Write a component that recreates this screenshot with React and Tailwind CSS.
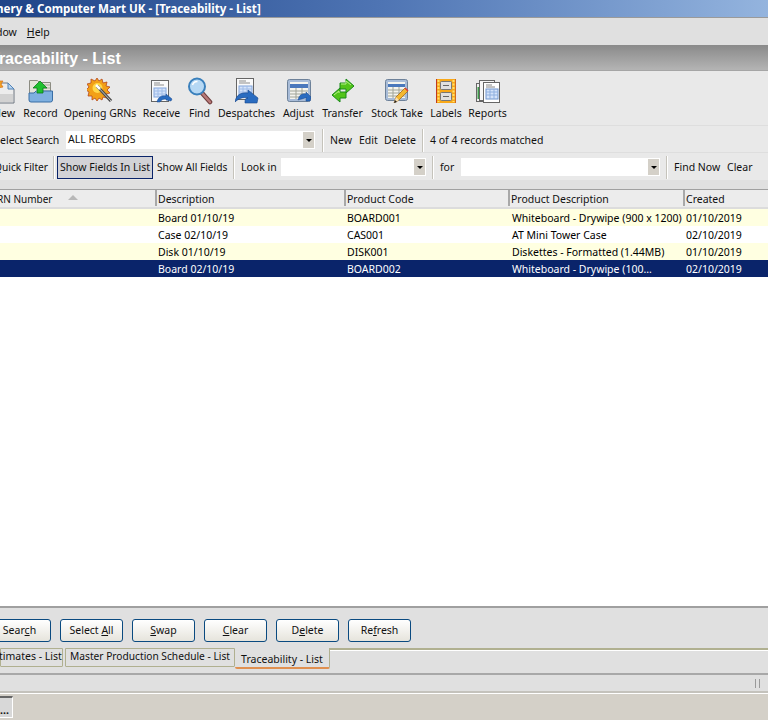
const font = "[font-family:'Noto_Sans',Tahoma,sans-serif]";

const DocIcon = () => (
  <svg width="24" height="26" viewBox="0 0 24 26">
    <path d="M2 5h14l6 6v14H2z" fill="#ececec" stroke="#6f7680" />
    <path d="M3 16h18v8H3z" fill="#d2d2d2" />
    <path d="M16 5v6h6z" fill="#b9d4ee" stroke="#4f82b8" />
    <path d="M0 0l3 2 3-2 1 3 4 0-2 3 2 3-5 1-3-2-3 2z" fill="#f0a020" stroke="#d8701a" strokeWidth="0.7" />
  </svg>
);

const RecordIcon = () => (
  <svg width="26" height="26" viewBox="0 0 26 26">
    <path d="M1.5 23V2.5h8l2 2h11V23z" fill="#e4e4da" stroke="#8c8c82" />
    <path d="M14 7h8M14 10h8M14 13h8" stroke="#a8a89c" />
    <path d="M1 15h5l2-2h16.5v9a2 2 0 0 1-2 2H3a2 2 0 0 1-2-2z" fill="#7fb0e0" stroke="#3a6ea5" />
    <path d="M8 13h7" stroke="#cfe2f5" />
    <path d="M12 3l7 7h-4v5H9v-5H5z" fill="#1fc02e" stroke="#0b7a1a" strokeWidth="0.8" />
  </svg>
);

const StarIcon = () => (
  <svg width="26" height="26" viewBox="0 0 26 26">
    <path d="M10 0l2 3 3-2 1 4 4-1-1 4 4 1-3 3 3 3-4 1 1 4-4-1-1 3-3-2-2 3-2-3-3 2 0-4-4 0 1-4-3-2 3-3-2-3 4-1 0-4 4 2z" fill="#f2a018" stroke="#b8481a" strokeWidth="0.8" />
    <circle cx="10.5" cy="10" r="5" fill="#ffd84a" />
    <path d="M10 8l14 15" stroke="#4a4a4a" strokeWidth="3.2" />
    <path d="M10 8l14 15" stroke="#c4c4c4" strokeWidth="1" />
    <path d="M9 7l4 4" stroke="#fff" strokeWidth="2.5" />
  </svg>
);

const ReceiveIcon = () => (
  <svg width="22" height="24" viewBox="0 0 22 24">
    <rect x="0.5" y="1.5" width="17" height="21" fill="#fafafa" stroke="#666" />
    <path d="M3 4h6M3 6h10" stroke="#8c8c8c" />
    <rect x="3" y="9" width="12" height="9" fill="#d4e3fa" stroke="#80a4dc" />
    <path d="M3 12h12M3 15h12M7 9v9M11 9v9" stroke="#a0bce8" />
    <path d="M6 23c1-5 5-7 9-6v-2l6 5-1 2-5-1v-1c-3 0-5 1-6 3z" fill="#2a6cc0" stroke="#17468c" strokeWidth="0.5" />
  </svg>
);

const DespatchIcon = () => (
  <svg width="24" height="26" viewBox="0 0 24 26">
    <rect x="1.5" y="0.5" width="17" height="21" fill="#fafafa" stroke="#666" />
    <path d="M4 3h7M4 5h11" stroke="#8c8c8c" />
    <rect x="4" y="8" width="13" height="9" fill="#d4e3fa" stroke="#80a4dc" />
    <path d="M4 11h13M4 14h13M8 8v9M12 8v9" stroke="#a0bce8" />
    <path d="M0 24c1-7 6-10 13-9v-3l10 8-1 5H10c0-3 0-5 3-5-5-1-9 0-13 4z" fill="#2a6cc0" stroke="#17468c" strokeWidth="0.6" />
  </svg>
);

const FindIcon = () => (
  <svg width="26" height="28" viewBox="0 0 26 28">
    <path d="M15 16l8 9" stroke="#6e3c3c" strokeWidth="4.6" strokeLinecap="round" />
    <path d="M15 16l8 9" stroke="#b87a78" strokeWidth="2.6" strokeLinecap="round" />
    <circle cx="10" cy="9.5" r="8" fill="#b6d8f4" stroke="#3a80bc" strokeWidth="2" />
    <path d="M5.5 8a5 5 0 0 1 5-3.5" stroke="#fff" strokeWidth="1.5" fill="none" />
  </svg>
);

const AdjustIcon = () => (
  <svg width="24" height="24" viewBox="0 0 24 24">
    <rect x="0.5" y="0.5" width="23" height="22" rx="2" fill="#a8bcd8" stroke="#6d8199" />
    <rect x="3" y="3" width="18" height="17" fill="#f4f4ee" />
    <rect x="3" y="5" width="18" height="4" fill="#4a78bc" />
    <path d="M3 12h18M3 15h18M3 18h18M9 9v11M15 9v11" stroke="#a0a498" />
    <path d="M11 21c1-5 4-7 8-6v-2l5 5-1 4h-4c0-2 0-3 1-3-3 0-5 1-9 2z" fill="#2a6cc0" stroke="#17468c" strokeWidth="0.5" />
  </svg>
);

const TransferIcon = () => (
  <svg width="24" height="26" viewBox="0 0 24 26">
    <path d="M15 1l8 7-8 7v-4H9V5h6z" fill="#52c41a" stroke="#1a8a1a" />
    <path d="M9 10l-8 7 8 7v-4h6v-6H9z" fill="#52c41a" stroke="#1a8a1a" />
    <path d="M10 6h5V3l5 4" stroke="#b8f08a" fill="none" />
    <path d="M8 15v-2l-5 4" stroke="#b8f08a" fill="none" />
  </svg>
);

const StockIcon = () => (
  <svg width="24" height="24" viewBox="0 0 24 24">
    <rect x="0.5" y="0.5" width="22" height="21" rx="2" fill="#a8bcd8" stroke="#6d8199" />
    <rect x="3" y="3" width="17" height="16" fill="#f4f4ee" />
    <rect x="3" y="5" width="17" height="3" fill="#4a78bc" />
    <path d="M3 11h17M3 14h17M3 17h17M8 8v11M14 8v11" stroke="#a0a498" />
    <path d="M9 24l2-6 9-9 3 3-9 9z" fill="#f4b830" stroke="#9a5c10" strokeWidth="0.7" />
    <path d="M9 24l2-6 3 3z" fill="#f8e0b0" />
    <path d="M9 24l1-3 2 2z" fill="#222" />
    <path d="M20 9l3 3" stroke="#d83a3a" strokeWidth="1.5" />
  </svg>
);

const LabelsIcon = () => (
  <svg width="20" height="24" viewBox="0 0 20 24">
    <rect x="0" y="0" width="20" height="24" fill="#f8a818" />
    <path d="M0.5 0v24" stroke="#c03a20" />
    <path d="M19.5 0v24" stroke="#d06a20" />
    <path d="M2.5 1v22M17.5 1v22" stroke="#ffe070" strokeWidth="2" strokeDasharray="2 1.5" />
    <rect x="4.5" y="2.5" width="11" height="8" rx="1" fill="#e0e0e0" stroke="#777" />
    <rect x="4.5" y="13.5" width="11" height="8" rx="1" fill="#e0e0e0" stroke="#777" />
    <path d="M7 6.5h6M7 17.5h6" stroke="#666" />
  </svg>
);

const ReportsIcon = () => (
  <svg width="24" height="24" viewBox="0 0 24 24">
    <rect x="0.5" y="4.5" width="14" height="18" fill="#f0f0f0" stroke="#666" />
    <path d="M2.5 8v12" stroke="#3f9a4a" strokeWidth="2" />
    <rect x="3.5" y="1.5" width="15" height="20" fill="#f6f6f6" stroke="#666" />
    <rect x="7.5" y="3.5" width="16" height="20" fill="#fff" stroke="#666" />
    <path d="M10 6h6M10 8h9" stroke="#888" />
    <rect x="10" y="10" width="12" height="10" fill="#d4e3fa" stroke="#6f94cc" />
    <path d="M10 13h12M10 16h12M14 10v10M18 10v10" stroke="#8fb0e0" />
  </svg>
);

const tools = [
  { label: "New", Icon: DocIcon, w: "w-[22px]" },
  { label: "Record", Icon: RecordIcon, w: "w-[35px]" },
  { label: "Opening GRNs", Icon: StarIcon, w: "w-[68px]" },
  { label: "Receive", Icon: ReceiveIcon, w: "w-[39px]" },
  { label: "Find", Icon: FindIcon, w: "w-[21px]" },
  { label: "Despatches", Icon: DespatchIcon, w: "w-[57px]" },
  { label: "Adjust", Icon: AdjustIcon, w: "w-[31px]" },
  { label: "Transfer", Icon: TransferIcon, w: "w-[41px]" },
  { label: "Stock Take", Icon: StockIcon, w: "w-[52px]" },
  { label: "Labels", Icon: LabelsIcon, w: "w-[30px]" },
  { label: "Reports", Icon: ReportsIcon, w: "w-[37px]" },
];

const rows = [
  { d: "Board 01/10/19", c: "BOARD001", p: "Whiteboard - Drywipe (900 x 1200)", t: "01/10/2019", bg: "bg-[#ffffe1] text-black" },
  { d: "Case 02/10/19", c: "CAS001", p: "AT Mini Tower Case", t: "02/10/2019", bg: "bg-white text-black" },
  { d: "Disk 01/10/19", c: "DISK001", p: "Diskettes - Formatted (1.44MB)", t: "01/10/2019", bg: "bg-[#ffffe1] text-black" },
  { d: "Board 02/10/19", c: "BOARD002", p: "Whiteboard - Drywipe (100…", t: "02/10/2019", bg: "bg-[#0a246a] text-white" },
];

const Sep = ({ className = "" }) => (
  <div className={`w-[2px] h-[23px] bg-[#c5c3bb] border-r border-white shrink-0 ${className}`} />
);

const Combo = ({ className, text }) => (
  <div className={`h-[18px] bg-white flex items-center justify-between pl-[2px] pr-[1px] shrink-0 ${className}`}>
    <p className="-mt-[1px]">{text}</p>
    <div className="w-[11px] h-[16px] bg-[#d4d0c8] flex items-center justify-center">
      <div className="w-0 h-0 border-x-[3px] border-x-transparent border-t-[3px] border-t-black" />
    </div>
  </div>
);

const ActionButton = ({ children }) => (
  <button className="h-[23px] w-[63px] shrink-0 rounded-[3px] border border-[#0a4a80] bg-gradient-to-b from-white to-[#e6e4dc] text-[#111] text-center">
    {children}
  </button>
);

export default function App() {
  return (
    <div className={`w-[768px] h-[720px] overflow-hidden bg-[#d4d0c8] flex flex-col text-[10.5px] text-[#111] ${font}`}>
      <div className="h-[18px] shrink-0 bg-gradient-to-r from-[#1f4488] via-[#4f75b4] to-[#94b4de] border-b border-[#9a9a9a] text-white font-bold text-[11.6px] leading-[17px] whitespace-nowrap">
        <span className="block -ml-[4px]">nery &amp; Computer Mart UK - [Traceability - List]</span>
      </div>

      <div className="h-[27px] shrink-0 bg-[#e0e0e0] flex items-center whitespace-nowrap pt-[3px]">
        <span className="-ml-[4px]">dow</span>
        <span className="ml-[10px]"><u>H</u>elp</span>
      </div>

      <div className="h-[25px] shrink-0 bg-gradient-to-b from-[#8a8a8a] to-[#b4b4b4] text-white font-bold text-[16px] leading-[27px] whitespace-nowrap font-['Liberation_Sans',sans-serif]">
        <span className="block -ml-[10px]">Traceability - List</span>
      </div>

      <div className="h-[56px] shrink-0 bg-[#e9e9e9] border-t border-b border-t-[#a5a5a5] border-b-[#dedede] flex items-start gap-[8px] pt-[7px] -ml-[7px] whitespace-nowrap">
        {tools.map(({ label, Icon, w }) => (
          <div key={label} className={`flex flex-col items-center shrink-0 ${w}`}>
            <div className="h-[26px] flex items-center justify-center"><Icon /></div>
            <span className="mt-[2px] leading-[14px]">{label}</span>
          </div>
        ))}
      </div>

      <div className="h-[27px] shrink-0 bg-[#e9e9e9] border-b border-[#dedede] flex items-center pt-[2px] whitespace-nowrap [&>span]:pt-[2px]">
        <span className="w-[66px] shrink-0">elect Search</span>
        <Combo className="w-[249px]" text="ALL RECORDS" />
        <Sep className="ml-[7px]" />
        <span className="ml-[6px] w-[29px] shrink-0">New</span>
        <span className="w-[25px] shrink-0">Edit</span>
        <span className="w-[38px] shrink-0">Delete</span>
        <Sep />
        <span className="ml-[6px]">4 of 4 records matched</span>
      </div>

      <div className="h-[27px] shrink-0 bg-[#e9e9e9] flex items-center pt-[1px] whitespace-nowrap [&>span]:pt-[2px]">
        <span className="-ml-[6px] w-[59px] shrink-0 text-[10.2px]">Quick Filter</span>
        <Sep />
        <div className="h-[23px] w-[96px] shrink-0 ml-[2px] pt-[2px] bg-[#d2d2d6] border border-[#0a246a] flex items-center justify-center">Show Fields In List</div>
        <span className="ml-[4px] w-[76px] shrink-0 text-[10.2px]">Show All Fields</span>
        <Sep />
        <span className="ml-[6px] w-[40px] shrink-0">Look in</span>
        <Combo className="w-[145px]" />
        <Sep className="ml-[6px]" />
        <span className="ml-[6px] w-[21px] shrink-0">for</span>
        <Combo className="w-[199px]" />
        <Sep className="ml-[6px]" />
        <span className="ml-[6px] w-[53px] shrink-0">Find Now</span>
        <span>Clear</span>
      </div>

      <div className="h-[10px] shrink-0 bg-[#e0e0e0] border-b border-[#a0a0a0]" />

      <div className="flex-1 min-h-0 bg-white flex flex-col whitespace-nowrap border-b-2 border-[#a0a0a0]">
        <div className="h-[19px] shrink-0 bg-[#ececec] border-b-2 border-[#dcdcdc] grid grid-cols-[155px_189px_164px_175px_85px]">
          <div className="relative">
            <span className="block -ml-[3px] text-[10px] leading-[19px]">RN Number</span>
            <div className="absolute left-[68px] top-[5px] w-0 h-0 border-x-[5px] border-x-transparent border-b-[5px] border-b-[#b8b8b8]" />
          </div>
          {["Description", "Product Code", "Product Description", "Created"].map((h) => (
            <div key={h} className="h-[16px] border-l-2 border-l-[#a8a8a8] pl-[1px] leading-[19px]">{h}</div>
          ))}
        </div>
        {rows.map((r) => (
          <div key={r.c} className={`h-[17px] shrink-0 grid grid-cols-[155px_189px_164px_175px_85px] leading-[18px] ${r.bg}`}>
            <div />
            <div className="pl-[3px]">{r.d}</div>
            <div className="pl-[3px]">{r.c}</div>
            <div className="pl-[4px]">{r.p}</div>
            <div className="pl-[3px]">{r.t}</div>
          </div>
        ))}
      </div>

      <div className="h-[40px] shrink-0 bg-[#e0e0e0] flex items-center gap-[9px] -ml-[12px] pt-[5px] whitespace-nowrap">
        <ActionButton>Sear<u>c</u>h</ActionButton>
        <ActionButton>Select <u>A</u>ll</ActionButton>
        <ActionButton><u>S</u>wap</ActionButton>
        <ActionButton><u>C</u>lear</ActionButton>
        <ActionButton>D<u>e</u>lete</ActionButton>
        <ActionButton>Re<u>f</u>resh</ActionButton>
      </div>

      <div className="h-[27px] shrink-0 bg-[#e0e0e0] flex items-start whitespace-nowrap border-b-2 border-[#a8a8a8]">
        <div className="h-[19px] w-[63px] border border-[#b0b090] rounded-b-[1px] leading-[15px] shrink-0">
          <span className="block -ml-[2px]">timates - List</span>
        </div>
        <div className="ml-[2px] h-[19px] w-[170px] border border-[#b0b090] rounded-b-[1px] text-center text-[10.2px] leading-[15px] shrink-0">Master Production Schedule - List</div>
        <div className="h-[21px] w-[95px] bg-[#e0e0e0] border-r border-[#b0b090] border-b-2 border-b-[#e09050] rounded-b-[2px] text-center leading-[22px] shrink-0">Traceability - List</div>
        <div className="flex-1 h-[3px] border-t-2 border-[#b0b090] border-b border-b-white" />
      </div>

      <div className="h-[18px] shrink-0 bg-[#e0e0e0] border-b-2 border-[#c4c2bc] flex items-center justify-end pr-[8px] gap-[3px]">
        <div className="w-[1px] h-[9px] bg-[#9a9a9a]" />
        <div className="w-[1px] h-[9px] bg-[#9a9a9a]" />
      </div>

      <div className="h-[27px] shrink-0 bg-[#d4d0c8] border-t border-white pt-[2px]">
        <div className="h-[22px] w-[13px] border-t-2 border-t-[#666] border-r border-b border-white bg-[#d8d8d8] font-bold leading-[24px] overflow-hidden">...</div>
      </div>
    </div>
  );
}
